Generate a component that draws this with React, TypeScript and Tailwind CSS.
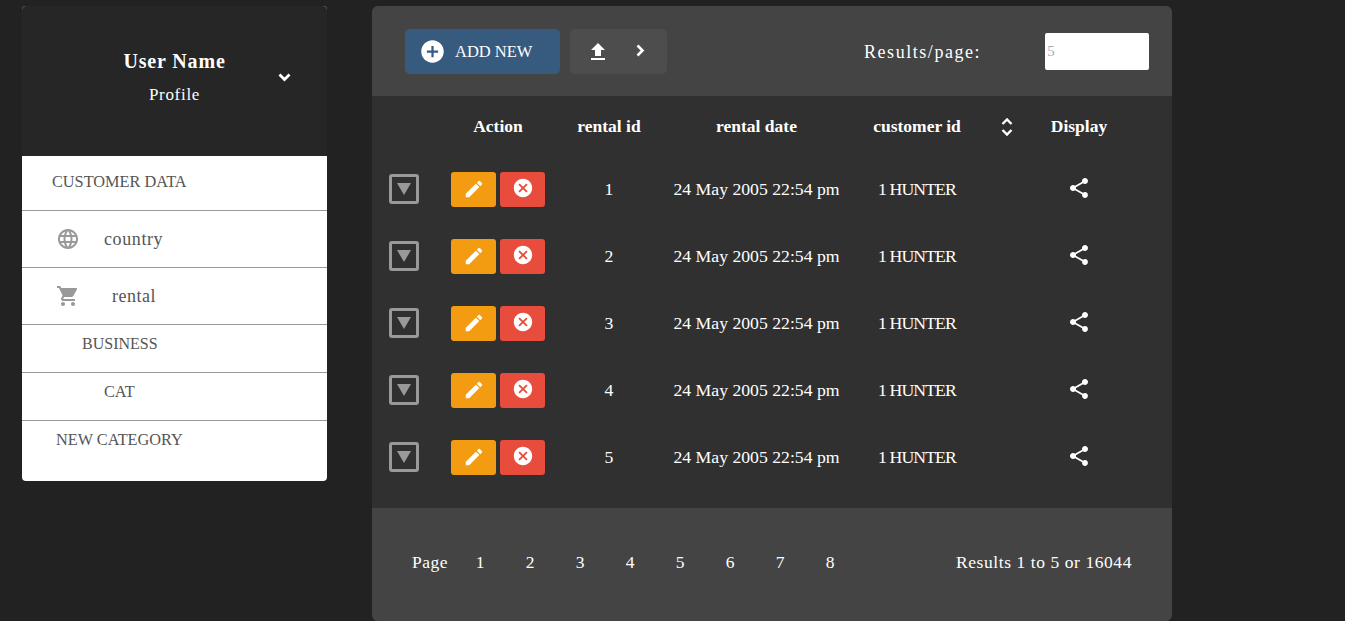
import {
  MdAddCircle,
  MdCancel,
  MdEdit,
  MdFileUpload,
  MdLanguage,
  MdShare,
  MdShoppingCart,
} from "react-icons/md";

const cols = "grid grid-cols-[79px_94px_128px_167px_154px_26px_118px] items-center";
const rows = [1, 2, 3, 4, 5];
const pages = [1, 2, 3, 4, 5, 6, 7, 8];

function Sidebar() {
  return (
    <aside className="w-[305px] h-[475px] rounded overflow-hidden bg-white shrink-0">
      {/* user block */}
      <div className="h-[150px] bg-[#262626] flex text-white">
        <div className="w-[305px] flex flex-col items-center pt-[42px] relative">
          <div className="text-[20px] leading-[26px] font-bold tracking-[0.85px]">User Name</div>
          <div className="text-[17px] leading-[22px] mt-[10px] tracking-[0.7px]">Profile</div>
          <svg
            className="absolute left-[256px] top-[67px]"
            width="13"
            height="9"
            viewBox="0 0 13 9"
            fill="none"
            stroke="white"
            strokeWidth="2.8"
          >
            <path d="M1.5 1.5 L6.5 6.5 L11.5 1.5" />
          </svg>
        </div>
      </div>
      <div className="text-[#555] text-[16.3px]">
        <div className="h-[55px] border-b border-[#999] pl-[30px] pt-[15px] leading-[22px]">CUSTOMER DATA</div>
        <div className="h-[57px] border-b border-[#999] flex items-center pl-[34px] gap-[24px]">
          <MdLanguage className="text-[24px] text-[#999]" />
          <span className="text-[18px] tracking-[0.6px]">country</span>
        </div>
        <div className="h-[57px] border-b border-[#999] flex items-center pl-[34px] gap-[32px]">
          <MdShoppingCart className="text-[24px] text-[#999]" />
          <span className="text-[18px] tracking-[0.5px]">rental</span>
        </div>
        <div className="h-[48px] border-b border-[#999] pl-[60px] pt-[8px] leading-[22px] text-[16px]">BUSINESS</div>
        <div className="h-[48px] border-b border-[#999] pl-[82px] pt-[8px] leading-[22px]">CAT</div>
        <div className="pl-[34px] pt-[8px] leading-[22px]">NEW CATEGORY</div>
      </div>
    </aside>
  );
}

function Row({ id }: { id: number }) {
  return (
    <div className={`${cols} h-[67px] text-center text-white text-[17.7px]`}>
      <div className="pl-[17px]">
        <div className="w-[30px] h-[30px] mb-[2px] border-[3px] border-[#999] rounded-[3px] flex items-center justify-center">
          <div className="w-0 h-0 border-x-[7px] border-x-transparent border-t-[12px] border-t-[#999] mt-[1px]" />
        </div>
      </div>
      <div className="flex gap-[4px]">
        <button className="w-[45px] h-[35px] rounded-[3px] bg-[#f39c12] flex items-center justify-center">
          <MdEdit className="text-[22px] text-white mb-[2px]" />
        </button>
        <button className="w-[45px] h-[35px] rounded-[3px] bg-[#e74c3c] flex items-center justify-center">
          <MdCancel className="text-[22px] text-white mb-[3px]" />
        </button>
      </div>
      <div>{id}</div>
      <div className="whitespace-nowrap">24 May 2005 22:54 pm</div>
      <div className="tracking-[-0.9px]">1 HUNTER</div>
      <div />
      <div className="flex justify-center">
        <MdShare className="text-[24px] mb-[3px]" />
      </div>
    </div>
  );
}

export default function App() {
  return (
    <div
      className="h-[621px] w-[1345px] overflow-hidden bg-[#222222] flex items-start pl-[22px] pt-[6px] gap-[45px]"
      style={{ fontFamily: '"Liberation Serif", serif' }}
    >
      <Sidebar />
      <main className="w-[800px] h-[615px] rounded-md overflow-hidden bg-[#303030] flex flex-col">
        <div className="h-[90px] bg-[#444444] flex items-center text-white pl-[33px] pt-[1px] shrink-0">
          <button className="w-[155px] h-[45px] rounded-[5px] bg-[#375a7f] flex items-center pl-[14px] gap-[9px] text-[16.5px]">
            <MdAddCircle className="text-[27px]" />
            <span className="pt-[1px]">ADD NEW</span>
          </button>
          <div className="ml-[10px] w-[97px] h-[45px] rounded-[5px] bg-[#4d4d4d] flex items-center pl-[16px] gap-[26px]">
            <MdFileUpload className="text-[24px]" />
            <svg width="9" height="13" viewBox="0 0 9 13" fill="none" stroke="white" strokeWidth="2.6" className="mb-[2px]">
              <path d="M1.5 1.5 L6.5 6.5 L1.5 11.5" />
            </svg>
          </div>
          <span className="ml-[197px] pt-[2px] text-[18px] tracking-[1.55px]">Results/page:</span>
          <input
            readOnly
            placeholder="5"
            className="ml-[64px] w-[104px] h-[37px] rounded-[2px] bg-white text-[15px] pl-[2px] placeholder:text-[#aaa] outline-none"
          />
        </div>
        <div className={`${cols} h-[60px] pt-[1px] text-center text-white font-bold text-[17.5px] shrink-0`}>
          <div />
          <div>Action</div>
          <div>rental id</div>
          <div>rental date</div>
          <div>customer id</div>
          <div className="flex justify-center">
            <svg width="14" height="20" viewBox="0 0 14 20" fill="none" stroke="white" strokeWidth="2.4">
              <path d="M2.5 7 L7 2.5 L11.5 7" />
              <path d="M2.5 13 L7 17.5 L11.5 13" />
            </svg>
          </div>
          <div>Display</div>
        </div>
        <div className="shrink-0">
          {rows.map((r) => (
            <Row key={r} id={r} />
          ))}
        </div>
        <div className="mt-[17px] flex-1 bg-[#444444] flex items-center text-white text-[17.5px] pl-[40px] pb-[5px]">
          <span className="w-[43px] tracking-[0.5px]">Page</span>
          <div className="flex">
            {pages.map((p) => (
              <span key={p} className="w-[50px] text-center">
                {p}
              </span>
            ))}
          </div>
          <span className="ml-auto mr-[40px] tracking-[0.57px]">Results 1 to 5 or 16044</span>
        </div>
      </main>
    </div>
  );
}
